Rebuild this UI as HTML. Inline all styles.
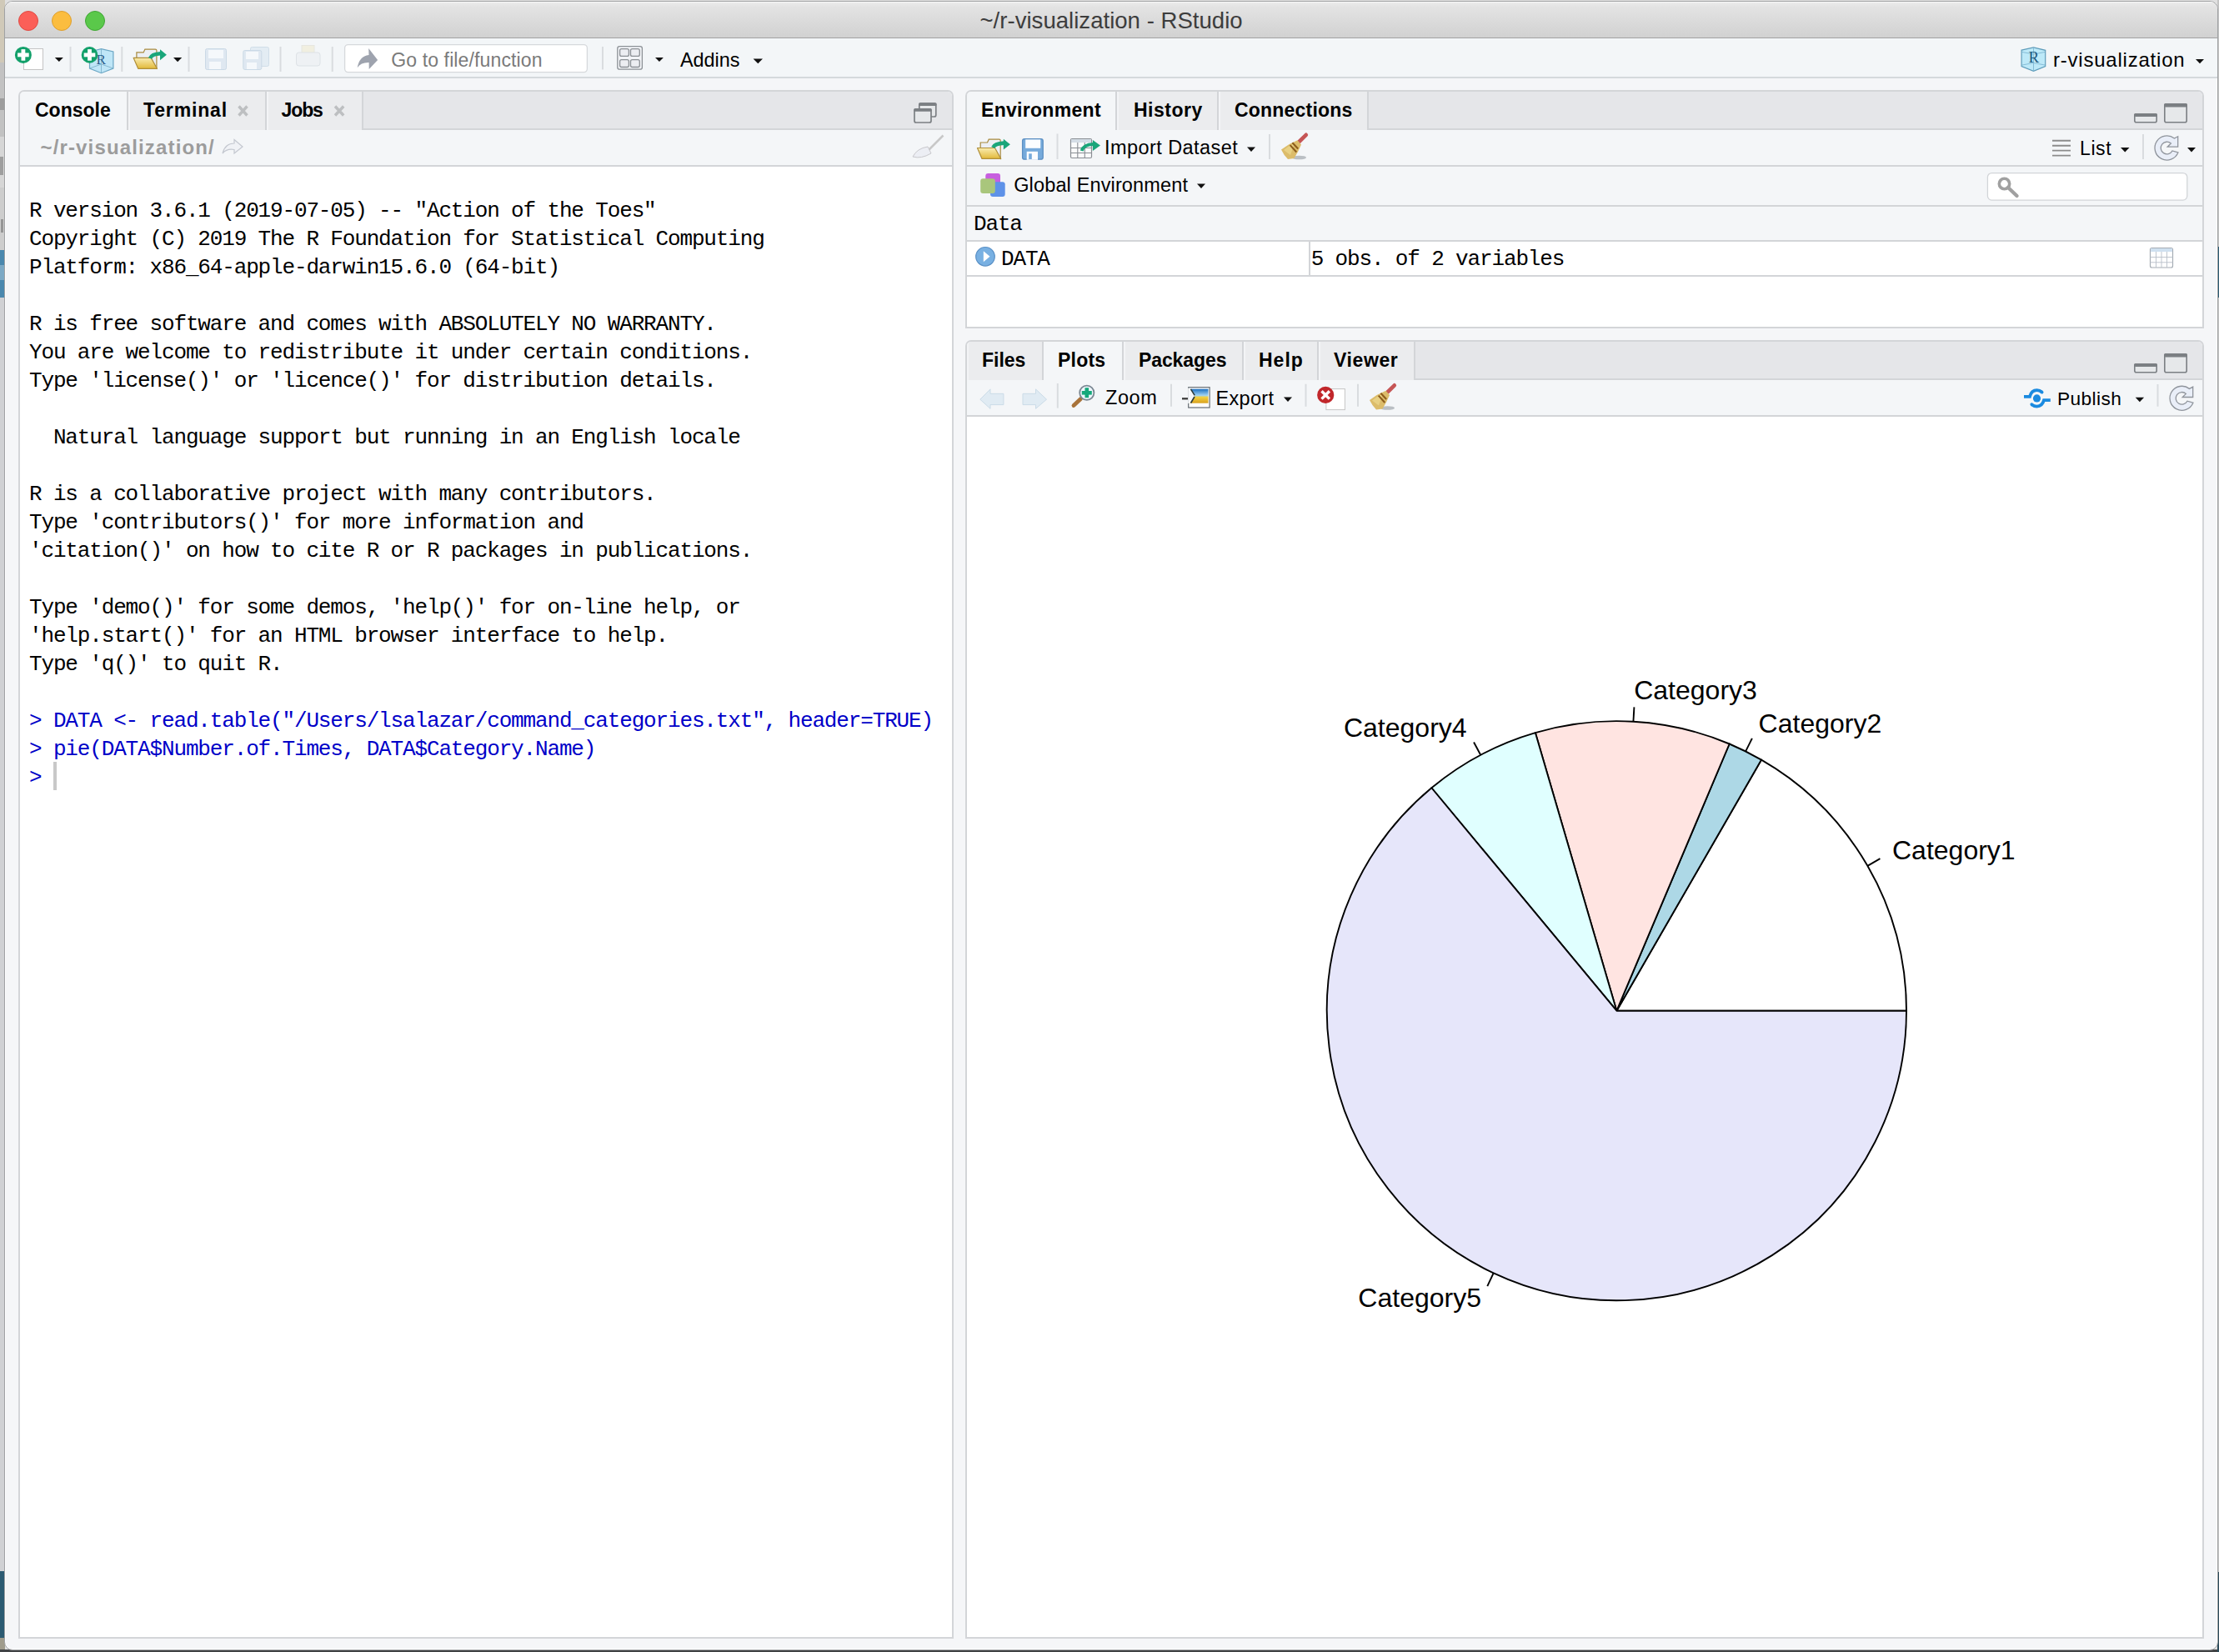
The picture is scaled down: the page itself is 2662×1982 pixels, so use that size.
<!DOCTYPE html><html><head><meta charset="utf-8"><style>
*{margin:0;padding:0;box-sizing:border-box}
html,body{width:2662px;height:1982px;overflow:hidden;background:#e0e0e0;font-family:"Liberation Sans",sans-serif;position:relative}
.a{position:absolute}
.t{position:absolute;white-space:pre;line-height:1}
.b{font-weight:bold}
.m{font-family:"Liberation Mono",monospace}
#win{position:absolute;left:5px;top:1px;width:2656px;height:1979px;background:#f5f6f8;border:1px solid #a0a2a4;border-radius:10px;overflow:hidden;box-shadow:inset 1px 0 0 #fefefe,inset -1px 0 0 #fefefe,inset 0 -1px 0 #fefefe}
#title{position:absolute;left:0;top:0;width:2656px;height:44px;background:linear-gradient(#ececec,#e3e3e3 15%,#d1d1d1);border-bottom:1px solid #a2a2a2;box-shadow:inset 0 1px 0 #f6f6f6}
.tl{position:absolute;width:24px;height:24px;border-radius:50%}
#tb{position:absolute;left:0;top:44px;width:2656px;height:48px;background:#f3f6f8;border-bottom:2px solid #d5d9dc}
.pane{position:absolute;border:2px solid #d3d5d8;border-radius:7px 7px 0 0;background:#fff;overflow:hidden}
.strip{position:absolute;left:0;top:0;right:0;height:46px;background:#e5e6e9;border-bottom:2px solid #d3d5d8}
.tab{position:absolute;top:0;height:46px;border-right:2px solid #d3d5d8;background:#ebecee;box-shadow:inset 2px 0 0 #f3f4f6}
.tab.act{background:#f4f6f8;height:48px;box-shadow:none}
.bar{position:absolute;left:0;right:0;background:#f4f6f8;border-bottom:2px solid #d3d5d8}
.sep{position:absolute;width:2px;background:#dadde0}
.arr{position:absolute;width:0;height:0;border-left:5.5px solid transparent;border-right:5.5px solid transparent;border-top:6px solid #111}
.con{position:absolute;left:35px;font-family:"Liberation Mono",monospace;font-size:26px;letter-spacing:-1.15px;line-height:34px;white-space:pre;color:#000}
</style></head><body>
<div class="a" style="left:0;top:0px;width:6px;height:75px;background:#d0c9b8"></div>
<div class="a" style="left:0;top:75px;width:6px;height:89px;background:#c2c2c2"></div>
<div class="a" style="left:0;top:164px;width:6px;height:61px;background:#d6d6d6"></div>
<div class="a" style="left:0;top:225px;width:6px;height:75px;background:#cdcdcd"></div>
<div class="a" style="left:0;top:300px;width:6px;height:57px;background:#4a88ae"></div>
<div class="a" style="left:0;top:357px;width:6px;height:1528px;background:#d0d1d4"></div>
<div class="a" style="left:0;top:1885px;width:6px;height:80px;background:#2c5b72"></div>
<div class="a" style="left:0;top:1965px;width:6px;height:17px;background:#a09c8c"></div>
<div class="a" style="left:0;top:118px;width:5px;height:14px;background:#707070;opacity:.45"></div><div class="a" style="left:0;top:188px;width:4px;height:22px;background:#5a5a5a;opacity:.45"></div><div class="a" style="left:1px;top:263px;width:3px;height:16px;background:#404040;opacity:.4"></div><div class="a" style="left:0;top:318px;width:5px;height:18px;background:#dbe8f0;opacity:.35"></div>
<div class="a" style="left:0;top:1979px;width:2662px;height:3px;background:#414345"></div>
<div class="a" style="left:2660px;top:0;width:2px;height:1982px;background:#c4c4c4"></div>
<div class="a" style="left:2660px;top:296px;width:2px;height:61px;background:#2c5b72"></div>
<div class="a" style="left:2660px;top:1886px;width:2px;height:96px;background:#2c4b5a"></div>
<div id="win"><div id="title">
<div class="tl" style="left:16px;top:11px;background:#fb5f58;border:1px solid #df4a43"></div>
<div class="tl" style="left:56px;top:11px;background:#fbbd3f;border:1px solid #de9f2e"></div>
<div class="tl" style="left:96px;top:11px;background:#5ac84a;border:1px solid #3fa634"></div>
</div><div id="tb"></div></div>
<div class="t" style="left:1175.5px;top:10.6px;font-size:27.6px;color:#3d3d3d;">~/r-visualization - RStudio</div>
<div class="pane" style="left:22px;top:108px;width:1122px;height:1858px">
<div class="strip"></div><div class="tab act" style="left:0;width:130px"></div><div class="tab" style="left:130px;width:166px"></div><div class="tab" style="left:296px;width:116px"></div>
<div class="bar" style="top:46px;height:44px"></div></div>
<div class="pane" style="left:1158px;top:108px;width:1486px;height:286px">
<div class="strip"></div><div class="tab act" style="left:0;width:180px"></div><div class="tab" style="left:180px;width:122px"></div><div class="tab" style="left:302px;width:180px"></div>
<div class="bar" style="top:46px;height:44px"></div><div class="bar" style="top:90px;height:48px"></div><div class="bar" style="top:138px;height:42px"></div>
<div class="a" style="left:0;right:0;top:180px;height:42px;border-bottom:2px solid #d3d5d8"></div><div class="a" style="left:410px;top:180px;width:2px;height:40px;background:#d3d5d8"></div></div>
<div class="pane" style="left:1158px;top:408px;width:1486px;height:1558px">
<div class="strip"></div><div class="tab" style="left:0;width:92px"></div><div class="tab act" style="left:92px;width:96px"></div><div class="tab" style="left:188px;width:144px"></div><div class="tab" style="left:332px;width:90px"></div><div class="tab" style="left:422px;width:116px"></div>
<div class="bar" style="top:46px;height:44px"></div></div>
<svg class="a" style="left:0;top:0" width="2662" height="1982" viewBox="0 0 2662 1982"><rect x="28.5" y="58.5" width="23" height="25" fill="#fff" stroke="#c4c4c4" stroke-width="1"/><circle cx="27.9" cy="65.9" r="10" fill="#12a06a"/><rect x="21.099999999999998" y="63.50000000000001" width="13.6" height="4.8" fill="#fff"/><rect x="25.5" y="59.10000000000001" width="4.8" height="13.6" fill="#fff"/><path d="M65.8,69.1 L75.9,69.1 L70.85,74 Z" fill="#111"/><rect x="83.5" y="56" width="2" height="30" fill="#d9dcdf"/><path d="M107.5,62 L121.5,58.7 L135.9,62 L135.9,82 L121.5,87.7 L107.5,82 Z" fill="#bfe6f7" stroke="#6aa6c4" stroke-width="1.2"/><path d="M121.5,58.7 L121.5,87.7 M107.5,82 L121.5,77 L135.9,82" fill="none" stroke="#7fb3cc" stroke-width="0.9"/><text x="115.5" y="77" font-family="Liberation Serif" font-size="17" fill="#2a5e8c">R</text><circle cx="107.5" cy="65.9" r="9.8" fill="#12a06a"/><rect x="100.7" y="63.50000000000001" width="13.6" height="4.8" fill="#fff"/><rect x="105.1" y="59.10000000000001" width="4.8" height="13.6" fill="#fff"/><rect x="145.3" y="56" width="2" height="30" fill="#d9dcdf"/><g transform="translate(159.9,58.6) scale(1.0)"><path d="M4,11 L4,4.3 L12.3,4.3 L14,0.5 L26.5,0.5 Q28,0.5 28,2 L28,23.7 Z" fill="#eceff4" stroke="#a88a3e" stroke-width="1.2"/><defs><linearGradient id="fg" x1="0" y1="0" x2="0" y2="1"><stop offset="0" stop-color="#f9ecb0"/><stop offset="1" stop-color="#e2b93a"/></linearGradient></defs><path d="M0.3,10.8 L21.3,10.8 L28.5,23.7 L5.8,23.7 Z" fill="url(#fg)" stroke="#b08f3a" stroke-width="1.2" stroke-linejoin="round"/></g><path d="M180,70 Q182,64.7 192.5,64.2" fill="none" stroke="#1aa67a" stroke-width="4.5" stroke-linecap="butt"/><path d="M192.0,59.2 L199.9,65.7 L192.0,72.2 Z" fill="#1aa67a"/><path d="M208,68.9 L218.2,68.9 L213.1,74.3 Z" fill="#111"/><rect x="225.5" y="56" width="2" height="30" fill="#d9dcdf"/><rect x="246.5" y="58.5" width="25" height="25" rx="2" fill="#dfe8f1" stroke="#cad9e6" stroke-width="1"/><rect x="250" y="60" width="18" height="10" fill="#f5f8fb"/><rect x="251" y="74" width="14" height="9" fill="#f5f8fb"/><rect x="300.5" y="56.5" width="22" height="23" rx="2" fill="#e3ecf3" stroke="#d0dde8" stroke-width="1"/><rect x="291.8" y="60.5" width="22" height="23" rx="2" fill="#dfe8f1" stroke="#cad9e6" stroke-width="1"/><rect x="295" y="62" width="15" height="9" fill="#f5f8fb"/><rect x="296" y="75" width="12" height="8" fill="#f5f8fb"/><rect x="335.5" y="56" width="2" height="30" fill="#d9dcdf"/><rect x="362" y="54.5" width="15" height="10" fill="#f1efe0" stroke="#e6e6e0" stroke-width="1"/><rect x="355.5" y="63" width="28.5" height="16" rx="3" fill="#eef1f4" stroke="#dde2e6" stroke-width="1"/><rect x="397.7" y="56" width="2" height="30" fill="#d9dcdf"/><rect x="413.6" y="53.6" width="290.8" height="33" rx="4" fill="#fff" stroke="#d6d9dc" stroke-width="1.3"/><path d="M442.2,58.1 L453.1,72 L442.7,82.9 L442.6,75.1 Q433,74.8 428.7,81.2 Q431,67.5 442.5,66 Z" fill="#9ea3ae"/><rect x="722" y="56" width="2" height="27.400000000000006" fill="#d9dcdf"/><rect x="740.8" y="55.6" width="29.6" height="27.6" rx="2.5" fill="#f2f4f7" stroke="#8c9196" stroke-width="1.3"/><rect x="743.6" y="58.6" width="10.8" height="8.8" rx="2" fill="#eceef2" stroke="#8c9196" stroke-width="1.3"/><rect x="756.5" y="58.6" width="10.8" height="8.8" rx="2" fill="#eceef2" stroke="#8c9196" stroke-width="1.3"/><rect x="743.6" y="71.7" width="10.8" height="8.8" rx="2" fill="#eceef2" stroke="#8c9196" stroke-width="1.3"/><rect x="756.5" y="71.7" width="10.8" height="8.8" rx="2" fill="#eceef2" stroke="#8c9196" stroke-width="1.3"/><path d="M786,68.9 L795.9,68.9 L790.95,74 Z" fill="#111"/><path d="M903.6,70.5 L915,70.5 L909.3,76.3 Z" fill="#111"/><path d="M2425.1,60.1 L2439.5,56.9 L2453.7,60.3 L2453.7,79.5 L2439.5,85.4 L2425.1,79.5 Z" fill="#bde9f8" stroke="#5e9cba" stroke-width="1.2"/><path d="M2439.5,56.9 L2439.5,85.4 M2426,62.5 L2439.5,65 L2453,62.5 M2426,78 L2439.5,75.5 L2453,78" fill="none" stroke="#7fb8d2" stroke-width="0.9"/><text x="2433.5" y="74.6" font-family="Liberation Serif" font-size="19" fill="#1f5a80">R</text><path d="M2634,71 L2644,71 L2639.0,76.3 Z" fill="#111"/><rect x="1102.8" y="124" width="20" height="16" rx="2" fill="#e6e8ea" stroke="#7b7f83" stroke-width="1.7"/><rect x="1102" y="123.2" width="21.6" height="3.7" rx="1.5" fill="#7b7f83"/><rect x="1097" y="131" width="20" height="16" rx="2" fill="#e6e8ea" stroke="#7b7f83" stroke-width="1.7"/><rect x="1096.2" y="130.1" width="21.6" height="3.7" rx="1.5" fill="#7b7f83"/><path d="M286.5,127.5 L296.5,138.5 M296.5,127.5 L286.5,138.5" stroke="#bdbfc1" stroke-width="3.4" stroke-linecap="butt"/><path d="M402.0,127.5 L412.2,138.5 M412.2,127.5 L402.0,138.5" stroke="#bdbfc1" stroke-width="3.4" stroke-linecap="butt"/><path d="M281,167.5 L291,176 L281,184 L281,179.5 Q272,178 267,184 Q270,172 281,172 Z" fill="#f0f2f6" stroke="#c4c8d0" stroke-width="1.2"/><path d="M1131.5,162.5 L1113,181" stroke="#c8c8c8" stroke-width="2.5" fill="none"/><path d="M1113,176 Q1100,178 1095,188 Q1105,191 1117,184 Z" fill="#eceef4" stroke="#c8c8cc" stroke-width="1"/><rect x="2560.8" y="136.8" width="26.4" height="10" rx="2" fill="#e6e8ea" stroke="#7b7f83" stroke-width="1.6"/><rect x="2560" y="136" width="28" height="4" rx="1.8" fill="#7b7f83"/><rect x="2596.8" y="124.8" width="26.4" height="22" rx="2" fill="#e6e8ea" stroke="#7b7f83" stroke-width="1.6"/><rect x="2596" y="124" width="28" height="4.5" rx="1.8" fill="#7b7f83"/><rect x="2560.8" y="436.8" width="26.4" height="10" rx="2" fill="#e6e8ea" stroke="#7b7f83" stroke-width="1.6"/><rect x="2560" y="436" width="28" height="4" rx="1.8" fill="#7b7f83"/><rect x="2596.8" y="424.8" width="26.4" height="22" rx="2" fill="#e6e8ea" stroke="#7b7f83" stroke-width="1.6"/><rect x="2596" y="424" width="28" height="4.5" rx="1.8" fill="#7b7f83"/><g transform="translate(1172.2,166.7) scale(1.0)"><path d="M4,11 L4,4.3 L12.3,4.3 L14,0.5 L26.5,0.5 Q28,0.5 28,2 L28,23.7 Z" fill="#eceff4" stroke="#a88a3e" stroke-width="1.2"/><defs><linearGradient id="fg" x1="0" y1="0" x2="0" y2="1"><stop offset="0" stop-color="#f9ecb0"/><stop offset="1" stop-color="#e2b93a"/></linearGradient></defs><path d="M0.3,10.8 L21.3,10.8 L28.5,23.7 L5.8,23.7 Z" fill="url(#fg)" stroke="#b08f3a" stroke-width="1.2" stroke-linejoin="round"/></g><path d="M1191.3,177 Q1193.3,172.14999999999998 1204.3,171.64999999999998" fill="none" stroke="#1aa67a" stroke-width="4.6" stroke-linecap="butt"/><path d="M1203.8,166.7 L1211.9,173.14999999999998 L1203.8,179.6 Z" fill="#1aa67a"/><rect x="1226.6" y="166.6" width="24.6" height="24.6" rx="2.5" fill="#76aadb" stroke="#5b8fc2" stroke-width="1.3"/><rect x="1230.2" y="167.4" width="18" height="10.4" fill="#fbfdff"/><rect x="1231.7" y="181.8" width="13.3" height="10" fill="#fbfdff"/><rect x="1234.2" y="184.3" width="3.6" height="6.7" fill="#76aadb"/><rect x="1267.5" y="160.5" width="2" height="30.5" fill="#d9dcdf"/><rect x="1284.5" y="166.5" width="25" height="23" rx="1.5" fill="#fafbfc" stroke="#8a8e94" stroke-width="1.2"/><rect x="1285" y="167" width="24" height="4" fill="#d4dde6"/><path d="M1292.8,171 L1292.8,189.7 M1301.3,171 L1301.3,189.7 M1284.5,177.5 L1309.5,177.5 M1284.5,183.5 L1309.5,183.5" stroke="#8a8e94" stroke-width="1.1"/><path d="M1297.7,181 Q1299.7,173.5 1311.4,173.0" fill="none" stroke="#1aa67a" stroke-width="3.8" stroke-linecap="butt"/><path d="M1310.9,168 L1320,174.5 L1310.9,181 Z" fill="#1aa67a"/><path d="M1496,176.6 L1506,176.6 L1501.0,182 Z" fill="#111"/><rect x="1522" y="161" width="2" height="30" fill="#d9dcdf"/><g transform="translate(0,0)"><ellipse cx="1558.5" cy="189" rx="8.5" ry="2.3" fill="#9ba1a8" opacity="0.65"/><path d="M1566.8,161.8 L1558.5,170" stroke="#c65656" stroke-width="4.6" stroke-linecap="round"/><path d="M1556.5,168.3 L1561,173.5 Q1557,183 1552.5,190 L1545,191 Q1540,186 1537,179.5 Q1546,172.5 1556.5,168.3 Z" fill="#dcbc6a"/><path d="M1540,180 Q1546,175 1553,172 L1548,186 Z" fill="#ecd88e" opacity="0.7"/><path d="M1550.4,171.3 L1557.2,178.4 M1547.7,174.1 L1555.3,182.5" stroke="#8c5c1c" stroke-width="2.1"/></g><path d="M2462,168.8 L2484,168.8 M2462,174.8 L2484,174.8 M2462,180.6 L2484,180.6 M2462,186.6 L2484,186.6" stroke="#8c8c8c" stroke-width="1.9"/><path d="M2544,177 L2554.5,177 L2549.25,182.5 Z" fill="#111"/><rect x="2570" y="161" width="2" height="30" fill="#d9dcdf"/><path d="M2612.94,182.93 A14.5,14.5 0 1 1 2608.43,166.07 L2612.70,163.80 L2612.70,176.20 L2600.20,176.20 L2604.38,172.08 A7.3,7.3 0 1 0 2605.95,180.93 Z" fill="#e9eef8" stroke="#8f949c" stroke-width="1.3" stroke-linejoin="miter"/><path d="M2624,177 L2634,177 L2629.0,182.5 Z" fill="#111"/><rect x="1182.3" y="208.1" width="17.7" height="16.6" rx="3" fill="#c75fdf"/><rect x="1188" y="218.2" width="17.7" height="17.7" rx="3" fill="#5e92e8"/><rect x="1176.2" y="214.2" width="17.6" height="17.7" rx="3" fill="#a9c67c"/><path d="M1436,220.5 L1446,220.5 L1441.0,226 Z" fill="#111"/><rect x="2384.4" y="207.6" width="239.4" height="32.5" rx="5" fill="#fff" stroke="#d2d5d8" stroke-width="1.3"/><circle cx="2404.5" cy="220.5" r="6.2" fill="none" stroke="#a0a0a0" stroke-width="3.6"/><path d="M2409,225 L2419.5,235" stroke="#a0a0a0" stroke-width="4.4" stroke-linecap="round"/><circle cx="1182" cy="307.8" r="11.3" fill="#78b0e2" stroke="#5a90c6" stroke-width="1.2"/><path d="M1179.8,301.2 L1187.5,307.8 L1179.8,314.3 Z" fill="#fff"/><rect x="2579.5" y="297.5" width="27" height="23.5" rx="2" fill="#fff" stroke="#a5acb4" stroke-width="1.2"/><rect x="2580" y="298" width="26" height="4" fill="#cfe0f0"/><path d="M2586.5,302 L2586.5,321 M2593,302 L2593,321 M2599.5,302 L2599.5,321 M2579.5,308.5 L2606.5,308.5 M2579.5,314.8 L2606.5,314.8" stroke="#b8c0c8" stroke-width="0.9"/><path d="M1175.8,479.2 L1188,466.9 L1188,472.3 L1203.9,472.3 L1203.9,485.6 L1188,485.6 L1188,490.3 Z" fill="#e0ebf3" stroke="#cadbe7" stroke-width="1"/><path d="M1255.5,479.2 L1242.5,466.9 L1242.5,472.3 L1227,472.3 L1227,485.6 L1242.5,485.6 L1242.5,490.3 Z" fill="#e0ebf3" stroke="#cadbe7" stroke-width="1"/><rect x="1267.8" y="460" width="2" height="29.600000000000023" fill="#d9dcdf"/><path d="M1288,486.5 L1296.5,478.5" stroke="#a8733a" stroke-width="4.8" stroke-linecap="round"/><circle cx="1303.8" cy="471.2" r="8.6" fill="#eef6fb" stroke="#7b8893" stroke-width="1.8"/><rect x="1297.8" y="469" width="12" height="4.6" fill="#15a87a"/><rect x="1301.5" y="465.2" width="4.6" height="12" fill="#15a87a"/><rect x="1404" y="460.7" width="2" height="27.100000000000023" fill="#d9dcdf"/><rect x="1425.7" y="464.7" width="25.4" height="24.3" fill="#fff" stroke="#646c72" stroke-width="1.2"/><defs><linearGradient id="sky" x1="0" y1="0" x2="0" y2="1"><stop offset="0" stop-color="#1b6fc0"/><stop offset="0.45" stop-color="#9ed2f4"/><stop offset="0.58" stop-color="#f2d040"/><stop offset="1" stop-color="#d9a21e"/></linearGradient></defs><rect x="1427.2" y="466.7" width="22.3" height="17" fill="url(#sky)"/><path d="M1425.2,465.5 L1428.5,466.5 L1433.5,474.3 L1428.5,483.5 L1425.2,484 Z" fill="#f6f8fa"/><path d="M1428.5,466.8 L1433.2,474.3 M1433,476 L1428.5,483.5" stroke="#2a3a3a" stroke-width="1.6"/><path d="M1418,478.3 L1425,478.3" stroke="#3a3a3a" stroke-width="2.3"/><path d="M1540,476.5 L1550,476.5 L1545.0,482.1 Z" fill="#111"/><rect x="1565.5" y="460.7" width="2" height="27.100000000000023" fill="#d9dcdf"/><rect x="1590.9" y="466.6" width="22.5" height="25" fill="#fff" stroke="#c5c5c5" stroke-width="1"/><circle cx="1590.2" cy="473.9" r="10.1" fill="#c1272b"/><path d="M1585.5,469.2 L1594.9,478.6 M1594.9,469.2 L1585.5,478.6" stroke="#fff" stroke-width="3.4"/><rect x="1628" y="460.7" width="2" height="27.100000000000023" fill="#d9dcdf"/><g transform="translate(106,300.5)"><ellipse cx="1558.5" cy="189" rx="8.5" ry="2.3" fill="#9ba1a8" opacity="0.65"/><path d="M1566.8,161.8 L1558.5,170" stroke="#c65656" stroke-width="4.6" stroke-linecap="round"/><path d="M1556.5,168.3 L1561,173.5 Q1557,183 1552.5,190 L1545,191 Q1540,186 1537,179.5 Q1546,172.5 1556.5,168.3 Z" fill="#dcbc6a"/><path d="M1540,180 Q1546,175 1553,172 L1548,186 Z" fill="#ecd88e" opacity="0.7"/><path d="M1550.4,171.3 L1557.2,178.4 M1547.7,174.1 L1555.3,182.5" stroke="#8c5c1c" stroke-width="2.1"/></g><g fill="none" stroke="#1a8ae0" stroke-width="3.8" stroke-linecap="round"><path d="M2428,475.8 L2435,475.8 Q2437,468.2 2443.5,468.2 Q2447,468.2 2449.5,470.5" stroke-linecap="butt"/><path d="M2449.5,470.5 L2449.6,470.6"/><path d="M2459.8,480.1 L2452,480.1 Q2450,487.6 2443.5,487.6 Q2440,487.6 2437.4,485.3" stroke-linecap="butt"/><path d="M2437.4,485.3 L2437.3,485.2"/></g><circle cx="2443.5" cy="477.9" r="4.6" fill="#1a8ae0"/><path d="M2561.7,476.8 L2572.1,476.8 L2566.8999999999996,482.3 Z" fill="#111"/><rect x="2587.5" y="461" width="2" height="26.69999999999999" fill="#d9dcdf"/><path d="M2630.94,483.23 A14.5,14.5 0 1 1 2626.43,466.37 L2630.70,464.10 L2630.70,476.50 L2618.20,476.50 L2622.38,472.38 A7.3,7.3 0 1 0 2623.95,481.23 Z" fill="#e9eef8" stroke="#8f949c" stroke-width="1.3" stroke-linejoin="miter"/></svg>
<div class="t b" style="left:42.0px;top:121.0px;font-size:23px;color:#000;letter-spacing:0px">Console</div>
<div class="t b" style="left:172.0px;top:121.0px;font-size:23px;color:#000;letter-spacing:0.85px">Terminal</div>
<div class="t b" style="left:337.5px;top:121.0px;font-size:23px;color:#000;letter-spacing:-1.1px">Jobs</div>
<div class="t b" style="left:1177.0px;top:121.0px;font-size:23px;color:#000;letter-spacing:0.3px">Environment</div>
<div class="t b" style="left:1360.0px;top:121.0px;font-size:23px;color:#000;letter-spacing:0.5px">History</div>
<div class="t b" style="left:1481.0px;top:121.0px;font-size:23px;color:#000;letter-spacing:0.2px">Connections</div>
<div class="t b" style="left:1178.0px;top:420.9px;font-size:23px;color:#000;letter-spacing:0px">Files</div>
<div class="t b" style="left:1269.0px;top:420.9px;font-size:23px;color:#000;letter-spacing:0.2px">Plots</div>
<div class="t b" style="left:1366.0px;top:420.9px;font-size:23px;color:#000;letter-spacing:-0.1px">Packages</div>
<div class="t b" style="left:1510.0px;top:420.9px;font-size:23px;color:#000;letter-spacing:1px">Help</div>
<div class="t b" style="left:1600.0px;top:420.9px;font-size:23px;color:#000;letter-spacing:0.6px">Viewer</div>
<div class="t" style="left:469.2px;top:60.9px;font-size:23px;color:#7a7a7a;letter-spacing:0.13px">Go to file/function</div>
<div class="t" style="left:816.0px;top:60.6px;font-size:23.4px;color:#000;">Addins</div>
<div class="t" style="left:2463.0px;top:59.7px;font-size:24px;color:#000;letter-spacing:0.78px">r-visualization</div>
<div class="t b" style="left:48.5px;top:165.3px;font-size:24px;color:#9c9c9c;letter-spacing:1.15px">~/r-visualization/</div>
<div class="t" style="left:1325.0px;top:166.3px;font-size:23.5px;color:#000;letter-spacing:0.43px">Import Dataset</div>
<div class="t" style="left:2495.0px;top:167.0px;font-size:23px;color:#000;letter-spacing:0.6px">List</div>
<div class="t" style="left:1216.2px;top:211.1px;font-size:23.5px;color:#000;letter-spacing:0.14px">Global Environment</div>
<div class="t" style="left:1326.0px;top:466.1px;font-size:23.5px;color:#000;letter-spacing:0.6px">Zoom</div>
<div class="t" style="left:1458.5px;top:466.6px;font-size:23.5px;color:#000;letter-spacing:0.3px">Export</div>
<div class="t" style="left:2468.1px;top:467.0px;font-size:22.7px;color:#000;letter-spacing:0.38px">Publish</div>
<div class="con" style="left:1168.0px;top:251.8px;color:#000">Data</div>
<div class="con" style="left:1201.0px;top:293.5px;color:#000">DATA</div>
<div class="con" style="left:1572.7px;top:293.5px;color:#000">5 obs. of 2 variables</div>
<div class="con" style="top:236px">R version 3.6.1 (2019-07-05) -- &quot;Action of the Toes&quot;
Copyright (C) 2019 The R Foundation for Statistical Computing
Platform: x86_64-apple-darwin15.6.0 (64-bit)

R is free software and comes with ABSOLUTELY NO WARRANTY.
You are welcome to redistribute it under certain conditions.
Type &#x27;license()&#x27; or &#x27;licence()&#x27; for distribution details.

  Natural language support but running in an English locale

R is a collaborative project with many contributors.
Type &#x27;contributors()&#x27; for more information and
&#x27;citation()&#x27; on how to cite R or R packages in publications.

Type &#x27;demo()&#x27; for some demos, &#x27;help()&#x27; for on-line help, or
&#x27;help.start()&#x27; for an HTML browser interface to help.
Type &#x27;q()&#x27; to quit R.

<span style="color:#0000c8">&gt; DATA &lt;- read.table("/Users/lsalazar/command_categories.txt", header=TRUE)
&gt; pie(DATA$Number.of.Times, DATA$Category.Name)
&gt; </span></div>
<div class="a" style="left:64px;top:914px;width:4px;height:34px;background:#c8c8c8"></div>
<svg class="a" style="left:0;top:0" width="2662" height="1982" viewBox="0 0 2662 1982"><g stroke="#000" stroke-width="1.9" stroke-linejoin="round"><path d="M1939.4,1212.7 L2287.00,1212.70 A347.6,347.6 0 0 0 2113.04,911.58 Z" fill="#ffffff"/><path d="M1939.4,1212.7 L2113.04,911.58 A347.6,347.6 0 0 0 2074.66,892.50 Z" fill="#add8e6"/><path d="M1939.4,1212.7 L2074.66,892.50 A347.6,347.6 0 0 0 1841.84,879.07 Z" fill="#ffe4e1"/><path d="M1939.4,1212.7 L1841.84,879.07 A347.6,347.6 0 0 0 1717.36,945.26 Z" fill="#e0ffff"/><path d="M1939.4,1212.7 L1717.36,945.26 A347.6,347.6 0 1 0 2287.00,1212.70 Z" fill="#e6e6fa"/><line x1="2240.38" y1="1038.82" x2="2255.43" y2="1030.13"/><line x1="2094.15" y1="901.45" x2="2101.88" y2="885.88"/><line x1="1959.41" y1="865.68" x2="1960.41" y2="848.33"/><line x1="1776.21" y1="905.79" x2="1768.05" y2="890.44"/><line x1="1791.67" y1="1527.35" x2="1784.29" y2="1543.08"/></g><g font-family="Liberation Sans" font-size="32" fill="#000"><text x="2270" y="1031">Category1</text><text x="2109.6" y="878.9">Category2</text><text x="1960.2" y="838.6">Category3</text><text x="1759.6" y="883.6" text-anchor="end">Category4</text><text x="1777" y="1567.8" text-anchor="end">Category5</text></g></svg>
</body></html>
